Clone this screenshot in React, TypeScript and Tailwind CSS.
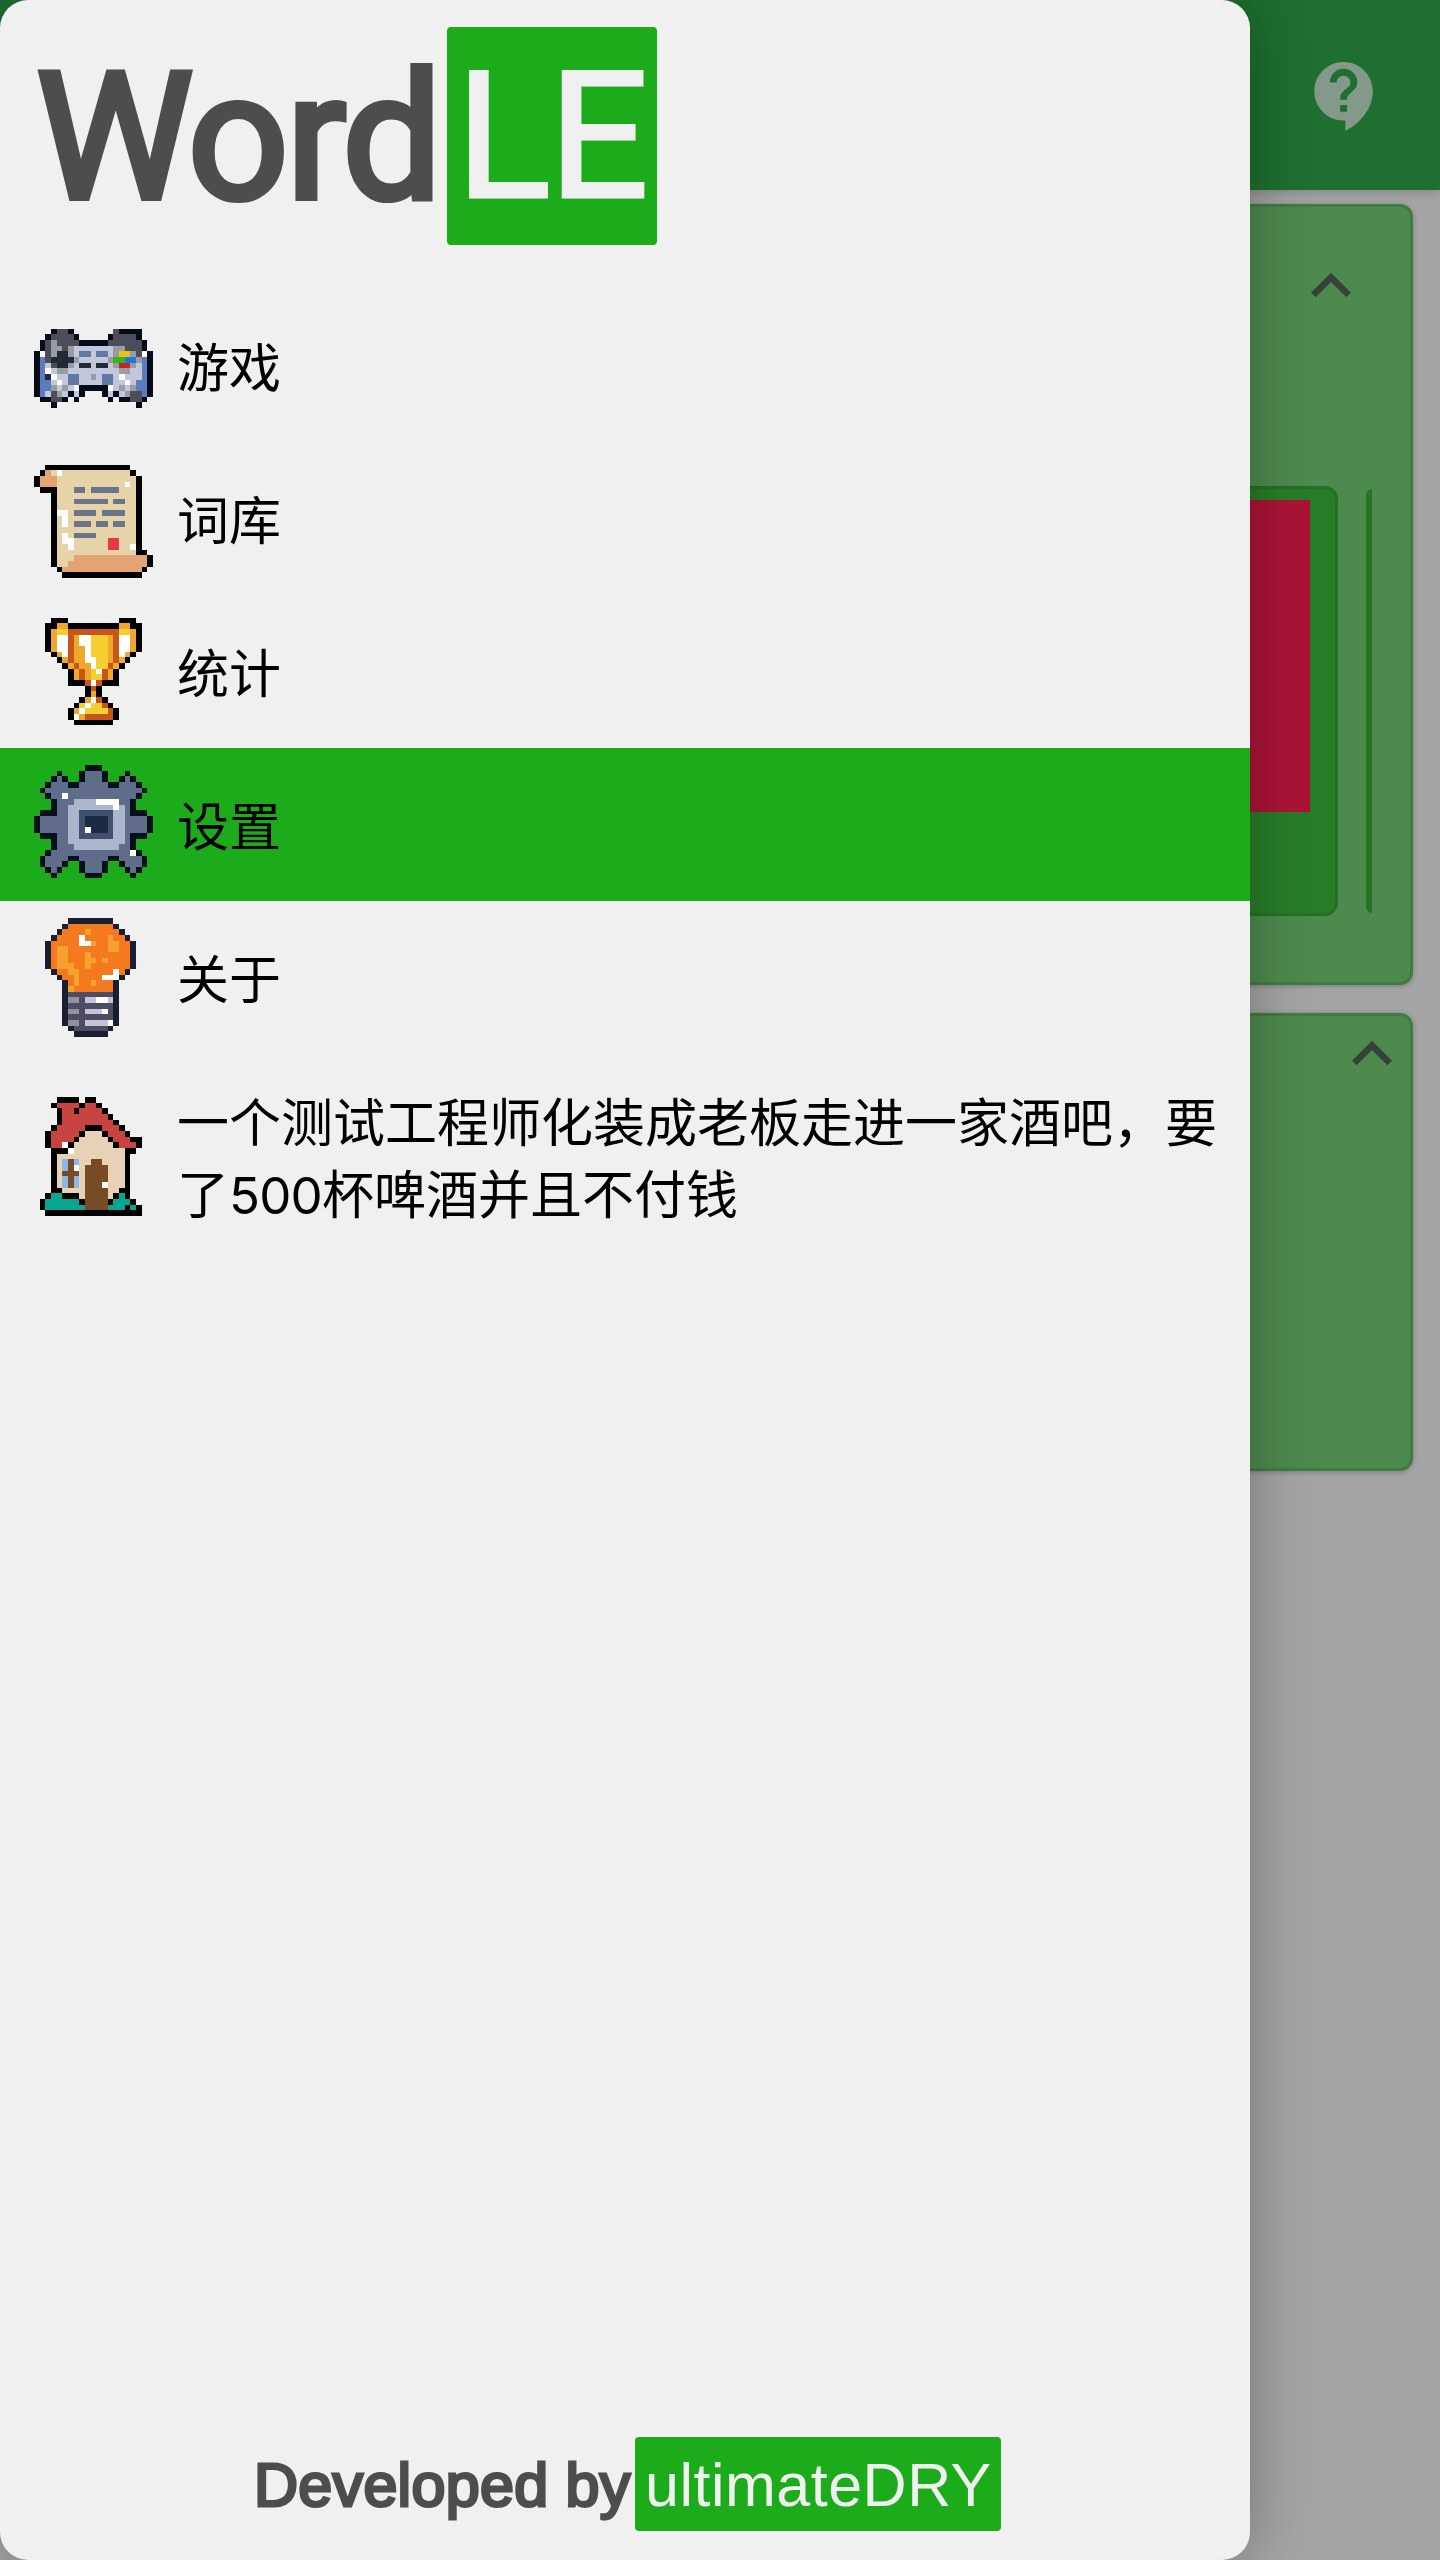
import React from 'react';
import { MdContactSupport, MdExpandLess } from 'react-icons/md';

type Palette = Record<string, string>;
type Sprite = { rows: string[]; palette: Palette };

const gamepad: Sprite = {
  palette: { k: '#050b18', d: '#4b4e58', g: '#9a9ca3', L: '#c3c7dc', B: '#5b7dbd', b: '#6079a3', x: '#242938', w: '#ffffff', y: '#ecc016', G: '#2cbb14', U: '#177bda', r: '#cf1f28' },
  rows: [
    '',
    '',
    '',
    '',
    '...kddk.......dkkkk',
    '..kddddk.....kddddk',
    '.kdgddddkkkkkddddddk',
    '.kdggdgLLLLLLLggdddk',
    'kwdgxxgLbbLbbLgyygdwk',
    'kBdxxxxgLLLLLgGGUUgBk',
    'kBLdxxgLxxLxxLgrrgLBk',
    'kBwLggLLLLLLLLLggLLBk',
    'kBxwLLbbLLgLbbLwLLLBk',
    'kBBLwLbbLLLLbbLLwLBBk',
    'kBBgLgLwkkkkkwLgLgBBk',
    'kBLdgLkLk...kLkLgddBk',
    '.kkddk.k.....k.kkddk',
    '...k..............k',
  ],
};

const scroll: Sprite = {
  palette: { k: '#000000', o: '#e3a373', t: '#e6d3a7', w: '#ffffff', b: '#6b7489', r: '#e23a45' },
  rows: [
    '',
    '..kkkkkkkkkkkkkkk',
    '.kotwttttttttttttk',
    'kooottttttttttttttk',
    'kooottttttttttttwtk',
    '.kkktttbbtbbbbbtttk',
    '...kttttttttttttttk',
    '...ktttbbbbbbtbbttk',
    '...kttttttttttttttk',
    '...kwwtbbbbtbbbbttk',
    '...ktwttttttttttttk',
    '...ktwtbbbtbbtbbttk',
    '...kttttttttttttttk',
    '...ktwtbbbbtttttttk',
    '...ktwwttttttrrtttk',
    '...kttwttttttrrttwk',
    '...kttttttttttttttkk',
    '...ktttoooooooooooook',
    '...kttooooooooooooook',
    '....kooooooooooooook',
    '.....kkkkkkkkkkkkkk',
  ],
};

const trophy: Sprite = {
  palette: { k: '#000000', a: '#efa72c', y: '#f3cf32', w: '#ffffff', r: '#c95518' },
  rows: [
    '',
    '...kkk.........kkk',
    '..kkaakkkkkkkkkaakk',
    '..kayyrrrrrrrrryyak',
    '..kawwrawwyyyarwwak',
    '..kawwrawwyyyarwwak',
    '..kawwraawyyyarwwak',
    '...kawraawyyyarwak',
    '....karaawwyyarak',
    '.....karaawyyrak',
    '......karaywrak',
    '......karayyrak',
    '......kkkrwrkkk',
    '.........krk',
    '.........kak',
    '........kawrk',
    '.......kywyyrk',
    '......kawyyyyrk',
    '......kwarrrrrk',
    '.......kkkkkkk',
  ],
};

const gear: Sprite = {
  palette: { k: '#051119', s: '#5f6d8b', L: '#aab6cb', w: '#ffffff', d: '#40516c', x: '#1d2943' },
  rows: [
    '.........kkk',
    '....k...ksssk...k',
    '...ksk..ksssk..ksk',
    '..kssskksssssk' + 'ksssk',
    '.ksssssssssssssssssk',
    '..ksswssssssssssssk',
    '...ksssLLLLwwwwssk',
    '...kssLLLLLLLLwLsk',
    '.kkkssLLddddddLLskkk',
    'ksssssLLdxxxxdLLssssk',
    'ksssssLLdxxxxdLLssssk',
    'ksssssLLdwxxxdLLssssk',
    '.kkkssLLddddddLLskkk',
    '...kssLLLLLLLLLLsk',
    '...ksssLLLLLLLLssk',
    '..ksssssssssssssswk',
    '.ksssskksssss' + 'kkssssk',
    '.ksssk..ksssk..ksssk',
    '..ksk...ksssk...ksk',
    '...k.....kkk.....k',
  ].map((row) => row),
};

const bulb: Sprite = {
  palette: { k: '#191f31', o: '#f5791f', a: '#f9a12e', w: '#ffffff', m: '#4d4c62', g: '#92929d', l: '#c3c4d8' },
  rows: [
    '......kkkkkkkk',
    '.....kooooooook',
    '....kooooaoooook',
    '...koooowooooaook',
    '..kooooowwaooaaook',
    '..koaaoooooooaaook',
    '..koaaoooaoooooook',
    '..koaaoooaaoaooook',
    '..koaaaooaoooooook',
    '...kooaaoooooowok',
    '....kooaoooowwwk',
    '.....koaooaoook',
    '.....kaoooooook',
    '.....kmmmmmmmmk',
    '.....kggmllwwlk',
    '.....kmmmmmmmmk',
    '.....kggmlllwmk',
    '.....kmmmmmmmmk',
    '.....kggmllllwk',
    '......kmmmmmmk',
    '.......kkkkkk',
  ],
};

const house: Sprite = {
  palette: { k: '#000000', r: '#c74440', t: '#e7d2b5', w: '#ffffff', b: '#8cb8e8', n: '#784a26', g: '#05a791' },
  rows: [
    '....kkkk.kk',
    '...krrrrkrrk',
    '....krrkrrrrk',
    '....krrrrrrrrk',
    '....krrrrrrrrrk',
    '...krrrrrkkkrrrk',
    '..krrrrrktttkrrrk',
    '..krrrrktttttkrrrkk',
    '..krrwktttttttkrrrk',
    '...kkkwtttttttttkk',
    '...kttttttttttttk',
    '...ktbnbttnnttttk',
    '...ktbnwtnnnntttk',
    '...ktnnntnnnntttk',
    '...ktbnbtnnnntttk',
    '...ktbnbtnnnwtttk',
    '...kkttttnnnnttkk',
    '..kggkkktnnnntkgk',
    '.kggggggknnnnkgggk',
    '.kgggggggnnnngggkgk',
    '..kkkkkkkkkkkkkkkkk',
  ],
};

function PixelIcon({ sprite }: { sprite: Sprite }) {
  return (
    <svg viewBox="0 0 21 21" className="h-[119px] w-[119px] shrink-0" shapeRendering="crispEdges" aria-hidden="true">
      {sprite.rows.map((row, y) =>
        row.split('').map((c, x) =>
          sprite.palette[c] ? <rect key={x + '-' + y} x={x} y={y} width={1} height={1} fill={sprite.palette[c]} /> : null,
        ),
      )}
    </svg>
  );
}

const items: { label: string; sprite: Sprite; active?: boolean }[] = [
  { label: '游戏', sprite: gamepad },
  { label: '词库', sprite: scroll },
  { label: '统计', sprite: trophy },
  { label: '设置', sprite: gear, active: true },
  { label: '关于', sprite: bulb },
];

function Drawer() {
  return (
    <aside className="absolute inset-y-0 left-0 flex w-[1250px] flex-col rounded-[28px] bg-[#f0f0f0] shadow-[0_0_60px_rgba(0,0,0,0.3)]">
      <header className="flex h-[289px] items-start pl-[36px] pt-[27px]">
        <div className="h-[218px] w-[411px] whitespace-nowrap font-['Roboto'] text-[177px] font-normal leading-[222px] tracking-[-2.5px] text-[#4d4d4d] [-webkit-text-stroke:6px_#4d4d4d]">
          Word
        </div>
        <div className="h-[218px] w-[210px] whitespace-nowrap rounded-[4px] bg-[#1bab1b] pl-[9px] font-['Roboto'] text-[176px] leading-[221px] tracking-[-2px] text-[#f0f0f0] [-webkit-text-stroke:3px_#f0f0f0]">
          LE
        </div>
      </header>
      <nav className="flex flex-col font-['Noto_Sans_CJK_SC',sans-serif] text-[52px] leading-[72px] text-black">
        {items.map((item) => (
          <a
            key={item.label}
            className={item.active ? 'flex h-[153px] items-center gap-6 bg-[#1bab1b] pl-[34px]' : 'flex h-[153px] items-center gap-6 pl-[34px]'}
          >
            <PixelIcon sprite={item.sprite} />
            <span className="pb-px">{item.label}</span>
          </a>
        ))}
        <a className="flex h-[204px] items-center gap-6 pl-[34px]">
          <PixelIcon sprite={house} />
          <span className="whitespace-nowrap pb-px">
            一个测试工程师化装成老板走进一家酒吧，要
            <br />了<span className="font-['Inter'] text-[51px] font-normal leading-none tracking-[-0.8px]">500</span>杯啤酒并且不付钱
          </span>
        </a>
      </nav>
      <footer className="mt-auto mb-[29px] flex h-[94px] items-center whitespace-nowrap pl-[254px] font-['Liberation_Sans'] leading-[97px]">
        <div className="h-[94px] w-[381px] text-[61px] tracking-[0.3px] text-[#4d4d4d] [-webkit-text-stroke:3px_#4d4d4d]">Developed by</div>
        <div className="h-[94px] w-[366px] rounded-[4px] bg-[#1bab1b] pl-[10px] text-[61px] tracking-[0.5px] text-[#f0f0f0]">ultimateDRY</div>
      </footer>
    </aside>
  );
}

export default function App() {
  return (
    <div className="relative h-[2560px] w-[1440px] overflow-hidden bg-[#a4a4a4]">
      <div className="flex h-[190px] items-start justify-end bg-[#1e6f30] pr-[53px] pt-[55px] shadow-[0_2px_10px_rgba(0,0,0,0.2)]">
        <MdContactSupport className="h-[82.6px] w-[82.6px] text-[#84998a]" />
      </div>
      <main className="flex flex-col gap-7 px-[27px] pt-[14px]">
        <section className="flex h-[781px] flex-col rounded-[13px] border-[3px] border-[#407c42] bg-[#4d8a4e] shadow-[0_1px_5px_rgba(0,0,0,0.25)]">
          <div className="flex h-[279px] justify-end pr-[39px] pt-[39px]">
            <MdExpandLess className="h-20 w-20 text-[#384038]" />
          </div>
          <div className="flex items-center justify-end gap-7 pr-[38px]">
            <div className="flex h-[430px] flex-1 flex-col rounded-[13px] border-[3px] border-[#247124] bg-[#287d28] pr-[25px] pt-[11px]">
              <div className="h-[312px] bg-[#aa1336]" />
            </div>
            <div className="h-[424px] w-[6px] rounded-l-[6px] bg-[#267426]" />
          </div>
        </section>
        <section className="flex h-[458px] justify-end rounded-[13px] border-[3px] border-[#407c42] bg-[#4d8a4e] pt-px shadow-[0_1px_5px_rgba(0,0,0,0.25)]">
          <MdExpandLess className="-mt-[3px] -mr-[2px] h-20 w-20 text-[#384038]" />
        </section>
      </main>
      <Drawer />
    </div>
  );
}
